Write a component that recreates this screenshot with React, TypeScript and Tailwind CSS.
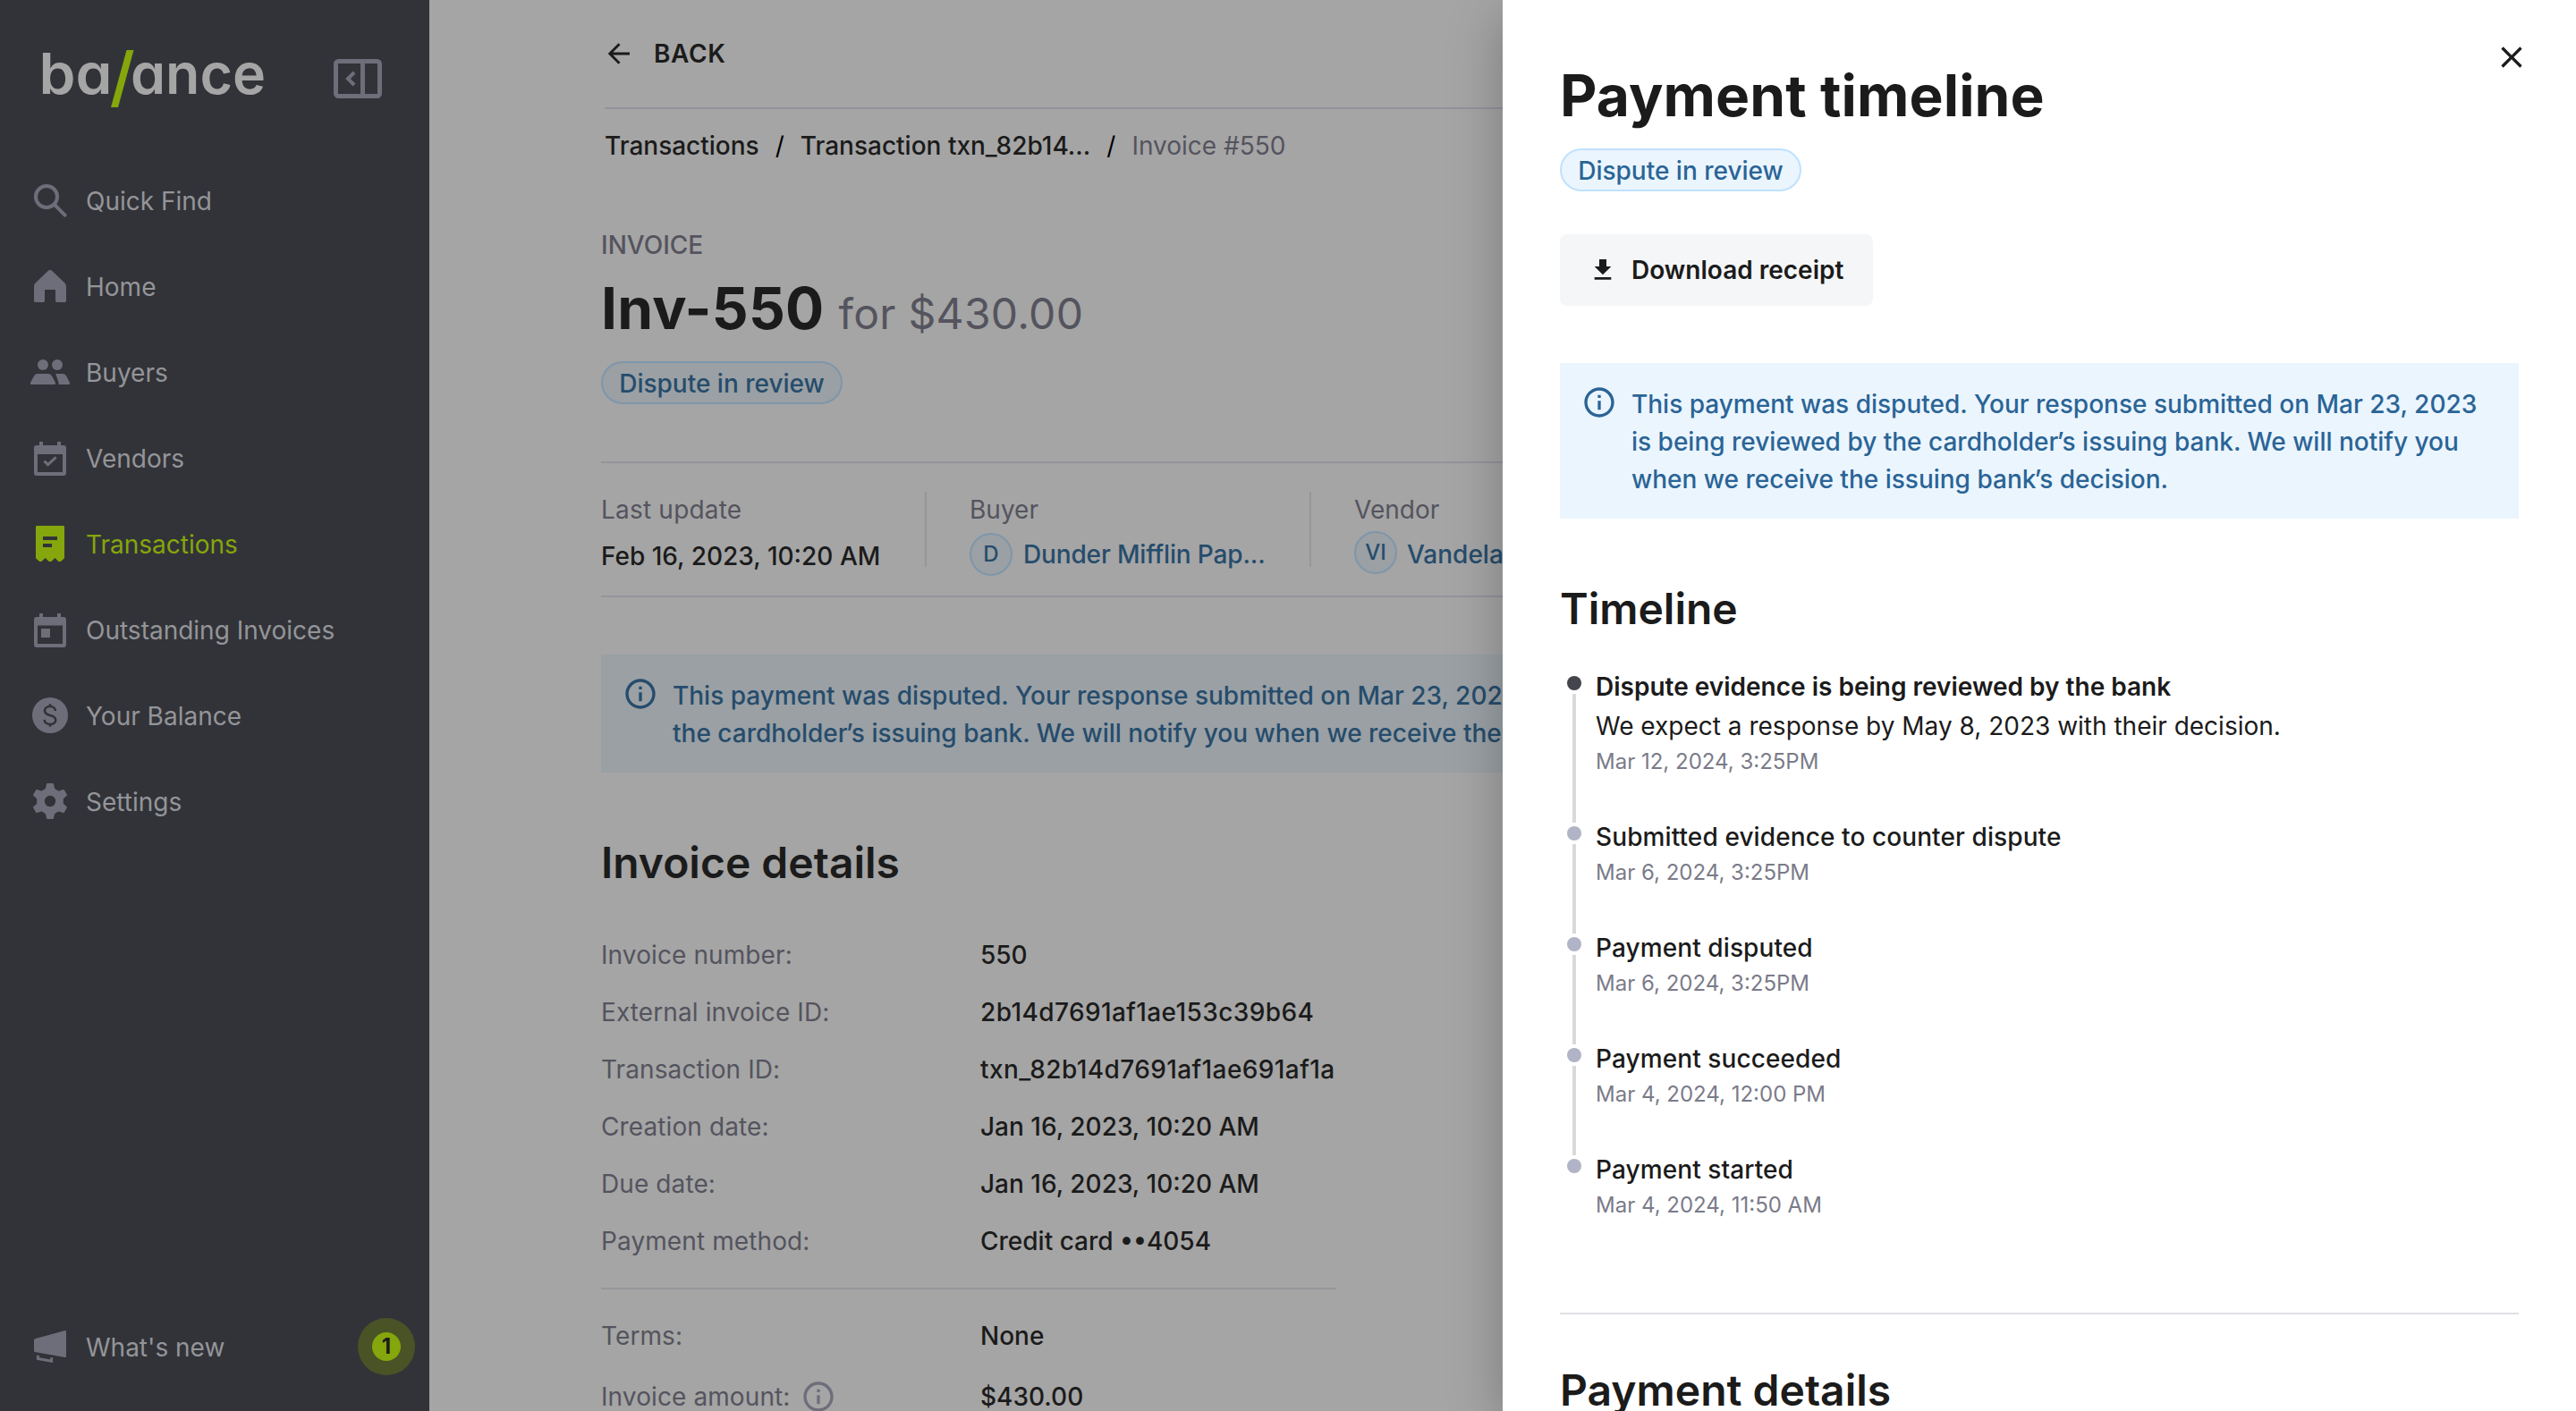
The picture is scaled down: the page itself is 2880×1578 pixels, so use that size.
import React from "react";
import { MdClose, MdFileDownload, MdOutlineInfo } from "react-icons/md";

type IconProps = { className?: string };

function SearchIcon({ className }: IconProps) {
  return (
    <svg viewBox="0 0 24 24" className={className} fill="none" stroke="currentColor" strokeWidth="2">
      <circle cx="10" cy="10" r="6" />
      <path d="M14.6 14.6l5.7 5.7" strokeLinecap="round" />
    </svg>
  );
}

function HomeIcon({ className }: IconProps) {
  return (
    <svg viewBox="0 0 24 24" className={className} fill="currentColor">
      <path d="M11.1 3.3a1.4 1.4 0 0 1 1.8 0l7.3 7q.8.8.8 1.8v8.2a.7.7 0 0 1-.7.7h-4.6a.7.7 0 0 1-.7-.7V14H9v6.3a.7.7 0 0 1-.7.7H3.7a.7.7 0 0 1-.7-.7v-8.2q0-1 .8-1.8z" />
    </svg>
  );
}

function BuyersIcon({ className }: IconProps) {
  return (
    <svg viewBox="0 0 24 24" className={className} fill="currentColor">
      <circle cx="8" cy="8" r="3" />
      <circle cx="16" cy="8" r="3" />
      <path d="M5.2 13h5.6q1.5 0 2.2 1.2l1.9 3.5q.4 1.3-.7 1.3H1.7q-1.1 0-.6-1.3L3 14.2Q3.7 13 5.2 13z" />
      <path d="M15.1 13h3.8q1.5 0 2.2 1.2l1.8 3.5q.5 1.3-.6 1.3h-5.5q.1-1-.3-1.9z" />
    </svg>
  );
}

function VendorsIcon({ className }: IconProps) {
  return (
    <svg viewBox="0 0 24 24" className={className} fill="currentColor">
      <path
        fillRule="evenodd"
        d="M6 3h2v2h8V3h2v2h1.5A1.5 1.5 0 0 1 21 6.500v14a1.5 1.5 0 0 1-1.5 1.5h-15A1.5 1.5 0 0 1 3 20.500v-14A1.5 1.5 0 0 1 4.500 5H6zM5 10v10h14V10z"
      />
      <path d="M8.7 13.8l2.100 2 4.500-4.100" fill="none" stroke="currentColor" strokeWidth="1.5" />
    </svg>
  );
}

function TransactionsIcon({ className }: IconProps) {
  return (
    <svg viewBox="0 0 24 24" className={className} fill="currentColor">
      <path
        fillRule="evenodd"
        d="M4.6 2h14.8q.6 0 .6.6v17.5L17.9 22h-1.100l-2.100-2-2.100 2h-1.200l-2.100-2-2.100 2H6.100L4 20.100V2.600q0-.6.6-.6zM8 8v2h8V8zM8 12v2h5v-2z"
      />
    </svg>
  );
}

function CalendarIcon({ className }: IconProps) {
  return (
    <svg viewBox="0 0 24 24" className={className} fill="currentColor">
      <path
        fillRule="evenodd"
        d="M6 3h2v2h8V3h2v2h1.5A1.5 1.5 0 0 1 21 6.500v14a1.5 1.5 0 0 1-1.5 1.5h-15A1.5 1.5 0 0 1 3 20.500v-14A1.5 1.5 0 0 1 4.500 5H6zM5 9.700V20h14V9.700z"
      />
      <path d="M7 11.500h5v5H7z" />
    </svg>
  );
}

function BalanceIcon({ className }: IconProps) {
  return (
    <svg viewBox="0 0 24 24" className={className}>
      <circle cx="12" cy="12" r="10" fill="currentColor" />
      <path
        d="M14.9 9.500C14.900 8 13.700 7 12 7S9 8 9 9.400c0 1.700 1.300 2.200 3 2.600s3.100.9 3.100 2.600c0 1.500-1.300 2.400-3.100 2.400s-3.100-1-3.200-2.600M12 5.600V7M12 17v1.400"
        fill="none"
        stroke="#323338"
        strokeWidth="1.3"
      />
    </svg>
  );
}

function SettingsIcon({ className }: IconProps) {
  return (
    <svg viewBox="0 0 24 24" className={className} fill="currentColor">
      {[0, 60, 120, 180, 240, 300].map((deg) => (
        <path
          key={deg}
          d="M10.6 2h2.800q.5 0 .6.5l.4 1.900q.2 1 1.300 1.400l-1 3H9.300l-1-3q1.100-.4 1.300-1.400l.4-1.900q.1-.5.6-.5z"
          transform={`rotate(${deg} 12 12)`}
        />
      ))}
      <circle cx="12" cy="12" r="5.2" fill="none" stroke="currentColor" strokeWidth="4.2" />
    </svg>
  );
}

function MegaphoneIcon({ className }: IconProps) {
  return (
    <svg viewBox="0 0 24 24" className={className} fill="currentColor">
      <path d="M3.5 7.6L20.300 3q.7-.1.7.5v14q0 .6-.6.5L3.500 15q-.5-.1-.5-.6V8.200q0-.5.5-.6z" />
      <path d="M5.2 16.900v1.900l7.600 1.300v-2" fill="none" stroke="currentColor" strokeWidth="1.5" />
    </svg>
  );
}

function Logo() {
  return (
    <svg width="252" height="72" viewBox="0 0 252 72" className="mt-13 shrink-0 overflow-visible">
      <g
        fill="#a5a5a5"
        fontFamily="Inter, sans-serif"
        fontWeight="600"
        fontSize="63"
        style={{ fontFeatureSettings: "'cv11' 1" }}
      >
        <text x="-2.5" y="53" textLength="82" lengthAdjust="spacingAndGlyphs">
          ba
        </text>
        <text x="100" y="53" textLength="151" lengthAdjust="spacingAndGlyphs">
          ance
        </text>
      </g>
      <path d="M95.500 4h8L86 68h-8z" fill="#85a60c" />
    </svg>
  );
}

function CollapseIcon() {
  return (
    <svg width="54" height="44" viewBox="0 0 54 44" fill="none" stroke="#6d6e7a" strokeWidth="5">
      <rect x="2.5" y="2.5" width="49" height="39" rx="3" />
      <path d="M32.500 3v38" />
      <path d="M23 15l-7 7 7 7" strokeWidth="4" />
    </svg>
  );
}

const navItems = [
  { label: "Quick Find", icon: SearchIcon },
  { label: "Home", icon: HomeIcon },
  { label: "Buyers", icon: BuyersIcon },
  { label: "Vendors", icon: VendorsIcon },
  { label: "Transactions", icon: TransactionsIcon, active: true },
  { label: "Outstanding Invoices", icon: CalendarIcon },
  { label: "Your Balance", icon: BalanceIcon },
  { label: "Settings", icon: SettingsIcon },
];

function Sidebar() {
  return (
    <aside className="flex w-[480px] shrink-0 flex-col bg-[#323338] text-[#949599]">
      <div className="flex h-[176px] items-start pl-[46px]">
        <Logo />
        <div className="mt-[66px] ml-[75px]">
          <CollapseIcon />
        </div>
      </div>
      <nav className="flex flex-col">
        {navItems.map(({ label, icon: Icon, active }) => (
          <a
            key={label}
            className={
              active
                ? "flex h-24 items-center gap-4 pl-8 text-[#85a60c]"
                : "flex h-24 items-center gap-4 pl-8"
            }
          >
            <Icon className={active ? "size-12" : "size-12 text-[#6d6e7a]"} />
            <span className="pt-0.5">{label}</span>
          </a>
        ))}
      </nav>
      <div className="mt-auto mb-6 flex h-24 items-center gap-4 pl-8">
        <MegaphoneIcon className="size-12 text-[#6d6e7a]" />
        <span className="pt-0.5">What's new</span>
        <span className="mr-4 ml-auto flex size-16 items-center justify-center rounded-full bg-[#4a5326]">
          <span className="flex size-8 items-center justify-center rounded-full bg-[#85a60c] text-2xl font-bold text-[#1b1b1b]">
            1
          </span>
        </span>
      </div>
    </aside>
  );
}

function Avatar({ children }: { children: React.ReactNode }) {
  return (
    <span className="flex size-12 shrink-0 items-center justify-center rounded-full border-2 border-[#7e96aa] bg-[#9aa0a4] text-2xl">
      {children}
    </span>
  );
}

// Pulls the apostrophe in towards its neighbours
function Tight({ children }: { children: React.ReactNode }) {
  return <span className="tracking-[-2px]">{children}</span>;
}

function DetailRow({ label, value, info }: { label: string; value: string; info?: boolean }) {
  const isId = label.endsWith("ID:");
  return (
    <div className="flex h-16 items-center">
      <dt className="flex w-[424px] items-center gap-3 tracking-[0.1px] text-[#54545e]">
        {label}
        {info && <MdOutlineInfo className="size-10 text-[#6d6e7a]" />}
      </dt>
      <dd className={isId ? "font-medium tracking-[0.4px]" : "font-medium"}>{value}</dd>
    </div>
  );
}

function InvoicePage() {
  return (
    <main className="w-[2400px] shrink-0 bg-[#a5a5a5] pl-48 text-[#1b1b1b]">
      <div className="ml-1 flex h-[122px] items-center gap-[27px] border-b-2 border-[#93949b] pl-1 font-semibold">
        <svg viewBox="0 0 24 24" className="size-6" fill="none" stroke="currentColor" strokeWidth="2.8">
          <path d="M24 12H2M12.500 1.200L1.800 12l10.700 10.800" />
        </svg>
        <span className="tracking-[0.6px]">BACK</span>
      </div>
      <div className="ml-1 flex h-[82px] items-center font-medium">
        <span>Transactions</span>
        <span className="mx-[18px] font-normal text-black">/</span>
        <span>Transaction txn_82b14...</span>
        <span className="mx-[18px] font-normal text-black">/</span>
        <span className="font-normal text-[#54545e]">Invoice #550</span>
      </div>

      <div className="mt-[49px] leading-[42px] font-medium text-[#54545e]">INVOICE</div>
      <h1 className="mt-2.5 flex h-20 items-baseline gap-4 text-[64px] leading-[80px] font-bold tracking-[0.3px]">
        Inv-550
        <span className="text-5xl font-normal text-[#54545e]">for $430.00</span>
      </h1>
      <span className="mt-[19px] flex h-12 w-[270px] items-center justify-center rounded-full border-2 border-[#7e96aa] bg-[#9aa0a4] pt-0.5 font-medium text-[#264c6c]">
        Dispute in review
      </span>

      <div className="mt-16 flex h-[152px] border-y-2 border-[#93949b] pt-8 leading-[42px]">
        <div className="h-[84px] w-[362px]">
          <div className="-mt-px tracking-[0.2px] text-[#54545e]">Last update</div>
          <div className="mt-2.5 font-medium">Feb 16, 2023, 10:20 AM</div>
        </div>
        <div className="h-[84px] w-[430px] border-l-2 border-[#96969a] pl-12">
          <div className="-mt-px text-[#54545e]">Buyer</div>
          <div className="mt-[5px] flex items-center gap-3 font-medium text-[#264c6c]">
            <Avatar>D</Avatar>
            <span className="tracking-[-0.15px]">Dunder Mifflin Pap...</span>
          </div>
        </div>
        <div className="h-[84px] border-l-2 border-[#96969a] pl-12">
          <div className="-mt-px text-[#54545e]">Vendor</div>
          <div className="mt-[3px] flex items-start gap-[11px] font-medium text-[#264c6c]">
            <Avatar>VI</Avatar>
            <span className="pt-[5px]">Vandelay</span>
          </div>
        </div>
      </div>

      <div className="mt-16 flex h-[132px] w-[1900px] gap-4 bg-[#9aa0a4] px-6 pt-6 leading-[42px] font-medium text-[#264c6c]">
        <MdOutlineInfo className="size-10 shrink-0" />
        <p className="pt-px">
          This payment was disputed. Your response submitted on Mar 23, 2023
          <br />
          the cardholde<Tight>r’</Tight>s issuing bank. We will notify you when we receive the
        </p>
      </div>

      <h2 className="mt-[71px] text-5xl leading-[60px] font-semibold">Invoice details</h2>
      <dl className="mt-[41px] w-[822px]">
        <DetailRow label="Invoice number:" value="550" />
        <DetailRow label="External invoice ID:" value="2b14d7691af1ae153c39b64" />
        <DetailRow label="Transaction ID:" value="txn_82b14d7691af1ae691af1a" />
        <DetailRow label="Creation date:" value="Jan 16, 2023, 10:20 AM" />
        <DetailRow label="Due date:" value="Jan 16, 2023, 10:20 AM" />
        <DetailRow label="Payment method:" value="Credit card ••4054" />
        <div className="my-5 h-0.5 bg-[#96969a]" />
        <DetailRow label="Terms:" value="None" />
        <div className="mt-1">
          <DetailRow label="Invoice amount:" value="$430.00" info />
        </div>
      </dl>
    </main>
  );
}

const events = [
  {
    title: "Dispute evidence is being reviewed by the bank",
    description: "We expect a response by May 8, 2023 with their decision.",
    date: "Mar 12, 2024, 3:25PM",
    current: true,
  },
  { title: "Submitted evidence to counter dispute", date: "Mar 6, 2024, 3:25PM" },
  { title: "Payment disputed", date: "Mar 6, 2024, 3:25PM" },
  { title: "Payment succeeded", date: "Mar 4, 2024, 12:00 PM" },
  { title: "Payment started", date: "Mar 4, 2024, 11:50 AM" },
];

function Timeline() {
  return (
    <ol className="mt-9 ml-2">
      {events.map((event, i) => {
        const last = i === events.length - 1;
        return (
          <li key={event.title} className="flex gap-4">
            <div className="flex w-4 flex-col items-center pt-[9px]">
              <span
                className={
                  event.current
                    ? "size-4 rounded-full bg-[#44444c]"
                    : "size-4 rounded-full bg-[#b1b4c6]"
                }
              />
              {!last && <span className="mt-1 -mb-[5px] w-1 flex-1 bg-[#d9d9d9]" />}
            </div>
            <div className={last ? "" : "pb-[45px]"}>
              <div
                className={
                  event.current
                    ? "leading-[42px] font-semibold"
                    : "leading-[42px] font-medium tracking-[0.1px]"
                }
              >
                {event.title}
              </div>
              {event.description && (
                <div className="mt-0.5 leading-[42px]">{event.description}</div>
              )}
              <div className="mt-px text-2xl leading-9 text-[#7a7b89]">{event.date}</div>
            </div>
          </li>
        );
      })}
    </ol>
  );
}

function PaymentDrawer() {
  return (
    <section className="absolute inset-y-0 right-0 w-[1200px] bg-white px-16 text-[#1b1b1b] shadow-[0_16px_56px_rgba(0,0,0,0.26)]">
      <button className="absolute top-11 right-[52px]">
        <MdClose className="size-10" />
      </button>
      <h1 className="pt-[67px] text-[64px] leading-[80px] font-bold tracking-[0.1px]">
        Payment timeline
      </h1>
      <span className="mt-[19px] flex h-12 w-[270px] items-center justify-center rounded-full border-2 border-[#bfe1fd] bg-[#ebf5fe] pt-0.5 font-medium text-[#2a6496]">
        Dispute in review
      </span>
      <button className="mt-12 flex h-20 w-[350px] items-center gap-4 rounded-lg bg-[#f5f6f8] pl-8 font-semibold">
        <MdFileDownload className="size-8" />
        Download receipt
      </button>
      <div className="mt-16 flex h-[174px] w-[1072px] gap-4 bg-[#ebf5fe] px-6 pt-6 leading-[42px] font-medium text-[#2a6496]">
        <MdOutlineInfo className="size-10 shrink-0" />
        <p className="pt-px">
          This payment was disputed. Your response submitted on Mar 23, 2023
          <br />
          is being reviewed by the cardholde<Tight>r’</Tight>s issuing bank. We will notify you
          <br />
          when we receive the issuing ban<Tight>k’</Tight>s decision.
        </p>
      </div>
      <h2 className="mt-[71px] text-5xl leading-[60px] font-semibold">Timeline</h2>
      <Timeline />
      <div className="mt-[102px] h-0.5 w-[1072px] bg-[#dfdfe6]" />
      <h2 className="mt-[55px] text-5xl leading-[60px] font-semibold">Payment details</h2>
    </section>
  );
}

export default function App() {
  return (
    <div className="relative flex h-[1578px] w-[2880px] overflow-hidden font-['Inter',sans-serif] text-[28px] leading-[42px]">
      <Sidebar />
      <InvoicePage />
      <PaymentDrawer />
    </div>
  );
}
